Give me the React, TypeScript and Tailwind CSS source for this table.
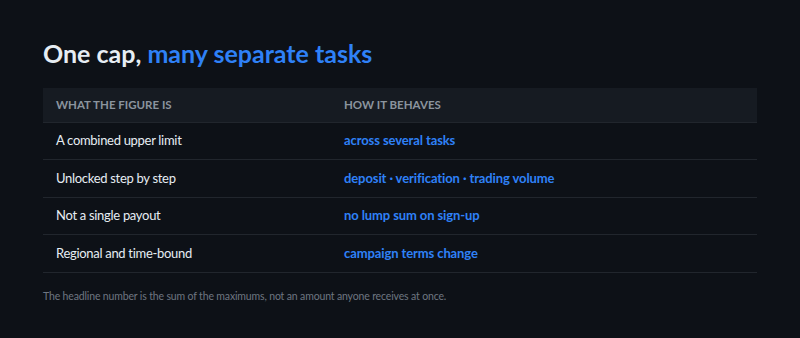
const ROWS = [
  { label: "A combined upper limit", value: "across several tasks" },
  { label: "Unlocked step by step", value: "deposit · verification · trading volume" },
  { label: "Not a single payout", value: "no lump sum on sign-up" },
  { label: "Regional and time-bound", value: "campaign terms change" },
];

export default function App() {
  return (
    <div
      className="min-h-[338px] w-[800px] bg-[#0d1117] px-[43px] pt-[37px] text-[#e6edf3]"
      style={{ fontFamily: 'Lato, "Noto Sans", sans-serif' }}
    >
      <h2 className="text-[25px] font-bold leading-[32px]">
        One cap, <span className="text-[#2f81f7]">many separate tasks</span>
      </h2>

      <table className="mt-[19px] w-full border-collapse text-left">
        <thead>
          <tr className="h-[34px] border-b border-[#21262d] bg-[#161b22]">
            <th className="w-[301px] pl-[13px] text-[11.5px] font-bold uppercase text-[#8b949e]">
              What the figure is
            </th>
            <th className="text-[11.5px] font-bold uppercase text-[#8b949e]">
              How it behaves
            </th>
          </tr>
        </thead>
        <tbody>
          {ROWS.map((r) => (
            <tr key={r.label} className="h-[37.5px] border-b border-[#21262d]">
              <td className="pl-[13px] text-[13px] tracking-[-0.3px]">{r.label}</td>
              <td className="text-[13px] font-bold tracking-[-0.1px] text-[#2f81f7]">{r.value}</td>
            </tr>
          ))}
        </tbody>
      </table>

      <p className="mt-[16px] text-[10.5px] tracking-[-0.15px] text-[#6e7681]">
        The headline number is the sum of the maximums, not an amount anyone receives at once.
      </p>
    </div>
  );
}
